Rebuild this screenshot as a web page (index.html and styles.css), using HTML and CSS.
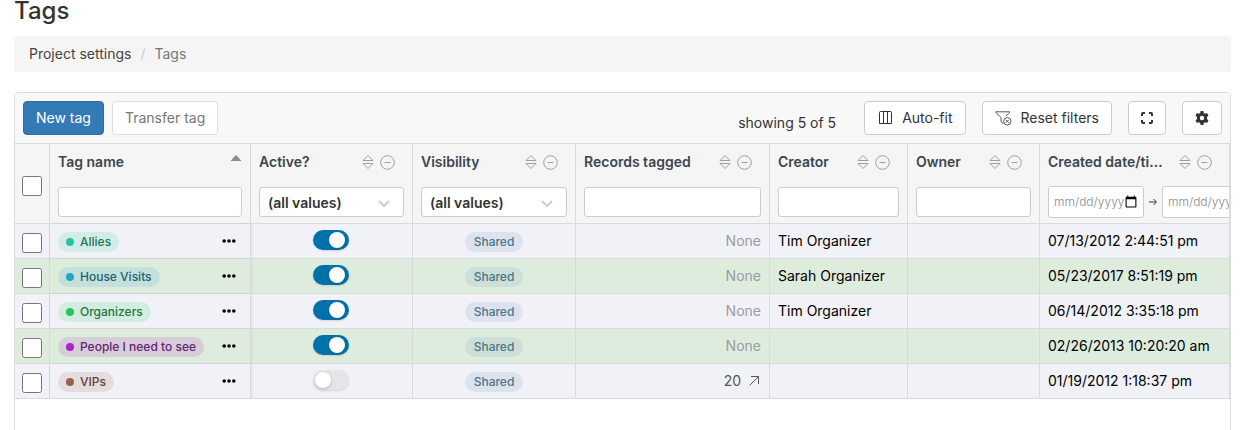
FILE: index.html
```html
<!DOCTYPE html>
<html lang="en">
<head>
<meta charset="utf-8">
<meta name="viewport" content="width=device-width, initial-scale=1">
<title>Tags</title>
<link rel="stylesheet" href="styles.css">
</head>
<body>
<svg class="sprite" aria-hidden="true">
  <symbol id="sort" viewBox="0 0 12 16"><path d="M1 6.500 6 1.500l5 5zM1 9.500h10l-5 5z" fill="none" stroke="currentColor" stroke-linejoin="round"/></symbol>
  <symbol id="minus" viewBox="0 0 15 15"><circle cx="7.500" cy="7.500" r="6.800" fill="none" stroke="currentColor"/><path d="M4.500 7.500h6" stroke="currentColor"/></symbol>
  <symbol id="dots" viewBox="0 0 14 4"><circle cx="2.200" cy="2" r="1.800"/><circle cx="7" cy="2" r="1.800"/><circle cx="11.800" cy="2" r="1.800"/></symbol>
</svg>
<h1 class="title">Tags</h1>
<nav class="breadcrumb" aria-label="Breadcrumb">
  <a class="crumb-link" href="#">Project settings</a><span class="crumb-sep">/</span><span class="crumb-current">Tags</span>
</nav>
<main class="panel">
  <div class="toolbar">
    <div class="toolbar-group">
      <button class="btn btn-primary" type="button">New tag</button>
      <button class="btn btn-muted" type="button">Transfer tag</button>
    </div>
    <div class="toolbar-tools">
      <span class="count">showing 5 of 5</span>
      <button class="btn btn-tool" type="button"><svg class="icon-columns" viewBox="0 0 14 14"><path d="M1.500.5h10a1 1 0 0 1 1 1v11h-12v-11a1 1 0 0 1 1-1zM4.500 .5v12M8.500 .5v12" fill="none" stroke="currentColor"/></svg>Auto-fit</button>
      <button class="btn btn-tool" type="button"><svg class="icon-filter" viewBox="0 0 17 15"><path d="M8.500 12.500 6 10.500V6.500L.8 1.500V.800h14v.7L11 5" fill="none" stroke="currentColor"/><circle cx="12.300" cy="10.300" r="3.700" fill="none" stroke="currentColor"/><path d="m10.800 8.800 3 3m0-3-3 3" stroke="currentColor"/></svg>Reset filters</button>
      <button class="btn btn-tool" type="button" aria-label="Full screen"><svg class="icon-full" viewBox="0 0 12 12"><path d="M1 4V2q0-1 1-1h2M8 1h2q1 0 1 1v2M11 8v2q0 1-1 1H8M4 11H2q-1 0-1-1V8" fill="none" stroke="currentColor" stroke-width="2"/></svg></button>
      <button class="btn btn-tool" type="button" aria-label="Settings"><svg class="icon-gear" viewBox="0 0 14 14"><path fill-rule="evenodd" d="M5.600 0h2.800l.4 2 1.300.8L12 2.100l1.500 2.500L12 6v2l1.500 1.400L12 11.900l-1.900-.7-1.300.8-.4 2H5.600l-.4-2-1.300-.8-1.900.7L.5 9.400 2 8V6L.5 4.600 2 2.100l1.900.7L5.200 2zM7 4.800a2.200 2.200 0 1 0 0 4.400 2.200 2.200 0 0 0 0-4.400z"/></svg></button>
    </div>
  </div>
  <div class="table-wrap">
  <table class="grid">
    <colgroup><col class="c-check"><col class="c-name"><col class="c-active"><col class="c-vis"><col class="c-rec"><col class="c-creator"><col class="c-owner"><col></colgroup>
    <thead>
      <tr>
        <th class="check-head"><input class="check" type="checkbox" aria-label="Select all"></th>
        <th><div class="head"><span class="head-label">Tag name</span><svg class="icon-asc" viewBox="0 0 12 6"><path d="M.5 6 5 .8Q6-.2 7 .8L11.500 6z"/></svg></div><div class="filter"><input class="field" type="text" aria-label="Filter tag name"></div></th>
        <th><div class="head"><span class="head-label">Active?</span><span class="head-icons"><svg class="icon-sort"><use href="#sort"/></svg><svg class="icon-minus"><use href="#minus"/></svg></span></div><div class="filter"><select class="field select" aria-label="Filter active"><option>(all values)</option></select></div></th>
        <th><div class="head"><span class="head-label">Visibility</span><span class="head-icons"><svg class="icon-sort"><use href="#sort"/></svg><svg class="icon-minus"><use href="#minus"/></svg></span></div><div class="filter"><select class="field select" aria-label="Filter visibility"><option>(all values)</option></select></div></th>
        <th><div class="head"><span class="head-label">Records tagged</span><span class="head-icons"><svg class="icon-sort"><use href="#sort"/></svg><svg class="icon-minus"><use href="#minus"/></svg></span></div><div class="filter"><input class="field" type="text" aria-label="Filter records tagged"></div></th>
        <th><div class="head"><span class="head-label">Creator</span><span class="head-icons"><svg class="icon-sort"><use href="#sort"/></svg><svg class="icon-minus"><use href="#minus"/></svg></span></div><div class="filter"><input class="field" type="text" aria-label="Filter creator"></div></th>
        <th><div class="head"><span class="head-label">Owner</span><span class="head-icons"><svg class="icon-sort"><use href="#sort"/></svg><svg class="icon-minus"><use href="#minus"/></svg></span></div><div class="filter"><input class="field" type="text" aria-label="Filter owner"></div></th>
        <th class="date-head"><div class="head"><span class="head-label">Created date/time</span><span class="head-icons"><svg class="icon-sort"><use href="#sort"/></svg><svg class="icon-minus"><use href="#minus"/></svg></span></div><div class="filter"><input class="date" type="date" aria-label="Created from"><svg class="icon-to" viewBox="0 0 8 8"><path d="M0 4h7M4.500 1 7.500 4l-3 3" fill="none" stroke="currentColor"/></svg><input class="date" type="date" aria-label="Created to"></div></th>
      </tr>
    </thead>
    <tbody>
      <tr>
        <td class="check-cell"><input class="check" type="checkbox" aria-label="Select Allies"></td>
        <td class="name-cell"><div class="name"><span class="tag tag-teal">Allies</span><button class="more" type="button" aria-label="More"><svg class="icon-dots"><use href="#dots"/></svg></button></div></td>
        <td class="center"><input class="toggle" type="checkbox" aria-label="Active" checked></td>
        <td class="center"><span class="badge">Shared</span></td>
        <td class="num none">None</td><td>Tim Organizer</td><td></td><td>07/13/2012 2:44:51 pm</td>
      </tr>
      <tr>
        <td class="check-cell"><input class="check" type="checkbox" aria-label="Select House Visits"></td>
        <td class="name-cell"><div class="name"><span class="tag tag-blue">House Visits</span><button class="more" type="button" aria-label="More"><svg class="icon-dots"><use href="#dots"/></svg></button></div></td>
        <td class="center"><input class="toggle" type="checkbox" aria-label="Active" checked></td>
        <td class="center"><span class="badge">Shared</span></td>
        <td class="num none">None</td><td>Sarah Organizer</td><td></td><td>05/23/2017 8:51:19 pm</td>
      </tr>
      <tr>
        <td class="check-cell"><input class="check" type="checkbox" aria-label="Select Organizers"></td>
        <td class="name-cell"><div class="name"><span class="tag tag-green">Organizers</span><button class="more" type="button" aria-label="More"><svg class="icon-dots"><use href="#dots"/></svg></button></div></td>
        <td class="center"><input class="toggle" type="checkbox" aria-label="Active" checked></td>
        <td class="center"><span class="badge">Shared</span></td>
        <td class="num none">None</td><td>Tim Organizer</td><td></td><td>06/14/2012 3:35:18 pm</td>
      </tr>
      <tr>
        <td class="check-cell"><input class="check" type="checkbox" aria-label="Select People I need to see"></td>
        <td class="name-cell"><div class="name"><span class="tag tag-purple">People I need to see</span><button class="more" type="button" aria-label="More"><svg class="icon-dots"><use href="#dots"/></svg></button></div></td>
        <td class="center"><input class="toggle" type="checkbox" aria-label="Active" checked></td>
        <td class="center"><span class="badge">Shared</span></td>
        <td class="num none">None</td><td></td><td></td><td>02/26/2013 10:20:20 am</td>
      </tr>
      <tr>
        <td class="check-cell"><input class="check" type="checkbox" aria-label="Select VIPs"></td>
        <td class="name-cell"><div class="name"><span class="tag tag-brown">VIPs</span><button class="more" type="button" aria-label="More"><svg class="icon-dots"><use href="#dots"/></svg></button></div></td>
        <td class="center"><input class="toggle" type="checkbox" aria-label="Active"></td>
        <td class="center"><span class="badge">Shared</span></td>
        <td class="num"><a class="records" href="#">20<svg class="icon-out" viewBox="0 0 10 10"><path d="M.5 9.500l9-9M2 .5h7.500V8" fill="none" stroke="currentColor"/></svg></a></td><td></td><td></td><td>01/19/2012 1:18:37 pm</td>
      </tr>
    </tbody>
  </table>
  </div>
</main>
</body>
</html>
```
FILE: styles.css
```css
*, *::before, *::after { box-sizing: border-box; }

body {
  display: flex;
  flex-direction: column;
  min-height: 100vh;
  margin: 0;
  padding: 0 14px;
  background: #fff;
  color: #333;
  font: 14px/20px Inter, "Liberation Sans", sans-serif;
}

button, input, select { font: inherit; color: inherit; }
a { color: inherit; text-decoration: none; }
svg { flex: none; fill: currentColor; }
.sprite { display: none; }

.title { margin: 0 0 14px; font-size: 24px; font-weight: 500; line-height: 22px; }

.breadcrumb {
  display: flex;
  gap: 9px;
  padding: 8px 15px;
  border-radius: 4px;
  background: #f5f5f5;
}
.crumb-link { color: #444; }
.crumb-sep { color: #ccc; }
.crumb-current { color: #777; }

.panel {
  flex: 1;
  margin-top: 20px;
  border: 1px solid #ddd;
  border-bottom: 0;
  border-radius: 4px 4px 0 0;
}

.toolbar {
  display: flex;
  justify-content: space-between;
  padding: 8px;
  background: #f8f8f8;
  border-bottom: 1px solid #d8dadc;
}
.toolbar-group { display: flex; gap: 8px; }
.toolbar-tools { display: flex; align-items: center; gap: 16px; }
.count { margin-right: 12px; padding-top: 10px; }

.btn {
  display: flex;
  align-items: center;
  height: 34px;
  padding: 0 12px;
  border: 1px solid #ccc;
  border-radius: 4px;
  background: #fff;
  color: #333;
}
.btn-primary { border-color: #2e6da4; background: #337ab7; color: #fff; }
.btn-muted { border-color: #ddd; color: #777; }
.icon-columns { width: 14px; height: 14px; margin: 0 9px 0 2px; }
.icon-filter { width: 17px; height: 15px; margin-right: 9px; color: #555; }
.icon-full { width: 12px; height: 12px; }
.icon-gear { width: 14px; height: 14px; }

.table-wrap { overflow: hidden; }
.grid {
  width: 100%;
  table-layout: fixed;
  border-collapse: separate;
  border-spacing: 0;
  color: #000;
}
.c-check { width: 35px; }
.c-name { width: 201px; }
.c-active { width: 162px; }
.c-vis { width: 163px; }
.c-rec { width: 194px; }
.c-creator { width: 138px; }
.c-owner { width: 132px; }

th, td { border: solid #d8dadc; border-width: 0 1px 1px 0; text-align: left; }
th {
  padding: 8px 8px 5px;
  background: #f5f5f5;
  color: #3c4650;
  font-weight: 600;
  vertical-align: top;
}
td { height: 35px; padding: 0 8px; white-space: nowrap; }
tbody tr { background: #f1f1f8; }
tbody tr:nth-child(even) { background: #deecde; }
.center { text-align: center; }
.center > * { vertical-align: middle; }
.num { text-align: right; }
.none { color: #999ca6; }

.head { display: flex; justify-content: space-between; height: 20px; margin-bottom: 14px; }
.head-label { min-width: 0; overflow: hidden; text-overflow: ellipsis; white-space: nowrap; }
.head-icons { display: flex; align-items: center; gap: 6px; margin: 0 9px 0 12px; color: #97a1a5; }
.icon-sort { width: 12px; height: 16px; }
.icon-minus { width: 15px; height: 15px; }
.icon-asc { width: 12px; height: 6px; margin-top: 3px; color: #84929a; }

.filter { display: flex; align-items: center; height: 32px; }
.field {
  width: 100%;
  height: 30px;
  padding: 0 8px;
  border: 1px solid #ccc;
  border-radius: 3px;
  background: #fff;
}
.select {
  appearance: none;
  padding-top: 2px;
  color: #333;
  font-weight: 600;
  background: #fff url("data:image/svg+xml,%3Csvg xmlns='http://www.w3.org/2000/svg' width='12' height='8'%3E%3Cpath d='M1 1l5 5 5-5' fill='none' stroke='%23ccc' stroke-width='2'/%3E%3C/svg%3E") no-repeat right 13px top 12px;
}
.date-head { overflow: hidden; }
.date {
  flex: none;
  width: 96px;
  height: 32px;
  padding: 0 5px;
  border: 1px solid #ccc;
  border-radius: 3px;
  background: #fff;
  color: #858b92;
  font-size: 12px;
  font-weight: 300;
}
.date::-webkit-datetime-edit-month-field,
.date::-webkit-datetime-edit-day-field,
.date::-webkit-datetime-edit-year-field { padding: 0; }
.date::-webkit-calendar-picker-indicator { width: 14px; height: 14px; margin: 0; padding: 0; }
.icon-to { width: 8px; height: 8px; margin: 0 5px; color: #333; }

.check { display: block; width: 20px; height: 20px; margin: 0; }
.check-head { padding: 32px 7px 0; }
.check-cell { padding: 4px 7px 0; }

.name-cell { box-shadow: 1px 0 3px rgba(0, 0, 0, 0.07); }
.name { display: flex; align-items: center; justify-content: space-between; }
.tag, .badge {
  display: inline-flex;
  align-items: center;
  height: 20px;
  padding: 0 8px;
  border-radius: 10px;
  font-size: 12px;
  font-weight: 500;
}
.tag { gap: 6px; margin-top: 1px; }
.tag::before { content: ""; width: 8px; height: 8px; border-radius: 50%; background: var(--dot); }
.tag-teal { --dot: #26c3a0; background: #d3ece8; color: #23735f; }
.tag-blue { --dot: #26a5c3; background: #c3e0dc; color: #226072; }
.tag-green { --dot: #26c35f; background: #d3ece1; color: #1f7540; }
.tag-purple { --dot: #a626c3; background: #d5cdd8; color: #662277; }
.tag-brown { --dot: #96624f; background: #e5dcdf; color: #5e4238; }
.badge { margin-top: 1px; padding: 0 9px; background: rgba(70, 130, 170, 0.12); color: #4b7589; }
.more { display: flex; padding: 0; margin-right: 6px; border: 0; background: none; color: #000; }
.icon-dots { width: 14px; height: 4px; }

.toggle {
  appearance: none;
  width: 36px;
  height: 20px;
  margin: 0 1px 3px 0;
  padding: 2px;
  border-radius: 10px;
  background: #e5e5e5;
  box-shadow: 0 1px 2px rgba(0, 0, 0, 0.12);
}
.toggle::before {
  content: "";
  display: block;
  width: 16px;
  height: 16px;
  border-radius: 50%;
  background: #fff;
  box-shadow: 0 1px 3px rgba(0, 0, 0, 0.2);
}
.toggle:checked { background: #0072aa; }
.toggle:checked::before { margin-left: 14px; }

.records { color: #555; }
.icon-out { width: 10px; height: 10px; margin: 0 2px 0 8px; }
```
